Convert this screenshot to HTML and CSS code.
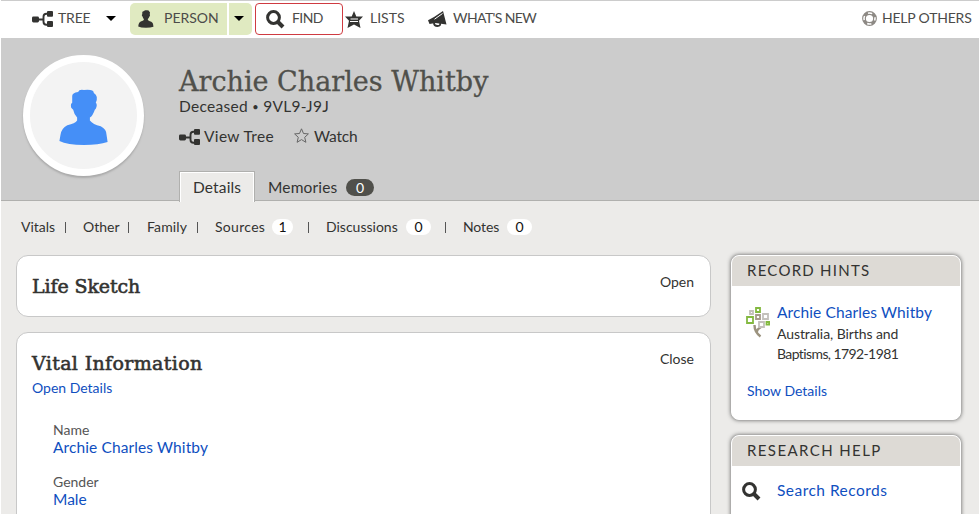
FILE: index.html
```html
<!DOCTYPE html>
<html lang="en">
<head>
<meta charset="utf-8">
<title>Archie Charles Whitby</title>
<link rel="stylesheet" href="styles.css">
</head>
<body>
<svg class="defs" aria-hidden="true">
  <symbol id="tree" viewBox="0 0 21 16"><path d="M6 8.500h6M17 2.700h-2.500q-3 0-3 3v5q0 3 3 3H17" fill="none" stroke="currentColor" stroke-width="1.900"/><rect y="5.500" width="7" height="6" rx="1.400"/><rect x="15" width="6" height="5.700" rx="1"/><rect x="15" y="10" width="6" height="6" rx="1"/></symbol>
  <symbol id="search" viewBox="0 0 19 19"><circle cx="7.500" cy="7.500" r="5.900" fill="none" stroke="currentColor" stroke-width="3"/><path d="M11.500 11.500l5.500 5.500" stroke="currentColor" stroke-width="4"/></symbol>
  <symbol id="person" viewBox="0 0 50 58"><path d="M13 7Q13 4 19 3Q20 0 25 1Q35 0 35 4Q40 7 37 14Q39 16 37 20L36 21Q34 27 31 29V32Q34 36 42 38Q48 41 48 47L49 54Q40 57 25 57Q8 57 0 53L1 47Q2 40 8 37Q16 35 18 32V29Q15 26 14 21L12 19Q11 15 13 14Z"/></symbol>
</svg>
<div class="page">
  <header class="topbar">
    <a class="nav nav-tree"><svg class="i-tree"><use href="#tree"/></svg><span class="t t-tree">TREE</span><i class="caret"></i></a>
    <a class="nav nav-person"><svg class="i-person"><use href="#person"/></svg><span class="t t-person">PERSON</span></a>
    <a class="nav nav-drop"><i class="caret"></i></a>
    <a class="nav nav-find"><svg class="i-search"><use href="#search"/></svg><span class="t t-find">FIND</span></a>
    <a class="nav nav-lists"><svg class="i-lists" viewBox="0 0 18 17"><path d="M9 0l2.300 5.500H18l-4 4.200L15.500 17 9 13.600 2.500 17 4 9.700 0 5.500h6.700z"/><path d="M5.500 8h7.500M5 10.500h8" stroke="#fff" stroke-width="1.100"/></svg><span class="t t-lists">LISTS</span></a>
    <a class="nav nav-news"><svg class="i-news" viewBox="0 0 20 16"><path d="M15 0l3.500 13.500L7.500 12l-6 1L0 9.200 6 6z"/><path d="M14.500 2.500L6.500 8.200" stroke="#fff" stroke-width="1"/><path d="M6 12q0 3 3.500 3t2.500-3" fill="none" stroke="currentColor" stroke-width="1.800"/></svg><span class="t t-news">WHAT'S NEW</span></a>
    <a class="nav nav-help"><svg class="i-help" viewBox="0 0 15 15"><circle cx="7.500" cy="7.500" r="5.500" fill="none" stroke="#8d8984" stroke-width="3.800"/><circle cx="7.500" cy="7.500" r="5.500" fill="none" stroke="#fff" stroke-width="1.500" stroke-dasharray="4.320 4.320" stroke-dashoffset="2.160"/></svg><span class="t t-help">HELP OTHERS</span></a>
  </header>
  <section class="hero">
    <div class="avatar"><svg class="i-avatar"><use href="#person"/></svg></div>
    <div class="identity">
      <h1>Archie Charles Whitby</h1>
      <p class="status">Deceased <small>•</small> 9VL9-J9J</p>
      <div class="actions">
        <a class="view"><svg class="i-tree"><use href="#tree"/></svg><span>View Tree</span></a>
        <a class="watch"><svg class="i-star" viewBox="0 0 15 15"><path d="M7.500.800l2 4.700 4.900.400-3.700 3.400 1.200 5-4.400-2.700-4.400 2.700 1.200-5L.600 5.900l4.900-.400z" fill="none" stroke="#666" stroke-width="1"/></svg><span>Watch</span></a>
      </div>
      <nav class="tabs"><a class="tab active"><span>Details</span></a><a class="tab memories"><span>Memories</span><b>0</b></a></nav>
    </div>
  </section>
  <nav class="subnav">
    <a class="s-vitals">Vitals</a><i></i><a class="s-other">Other</a><i></i><a class="s-family">Family</a><i></i><a class="s-sources">Sources<b>1</b></a><i></i><a class="s-disc">Discussions<b>0</b></a><i></i><a class="s-notes">Notes<b>0</b></a>
  </nav>
  <main class="columns">
    <div class="main">
      <section class="card sketch"><h2>Life Sketch</h2><a class="toggle">Open</a></section>
      <section class="card vital">
        <div class="heading"><h2 class="wide">Vital Information</h2><a class="toggle">Close</a></div>
        <a class="details">Open Details</a>
        <dl><dt>Name</dt><dd class="name">Archie Charles Whitby</dd><dt>Gender</dt><dd>Male</dd></dl>
      </section>
    </div>
    <aside>
      <section class="panel hints">
        <h3>RECORD HINTS</h3>
        <div class="hint">
          <svg class="i-hint" viewBox="0 0 24 30"><path d="M8.500 18q0 7 6 11.500M15 20q-4 2-4.500 5.500" fill="none" stroke="#9c937f" stroke-width="2.400"/><g fill="#fff" stroke-width="1.800"><path stroke="#c4c1bc" d="M4 4h3v3H4zM17 7h5v5h-5zM13 15h5v5h-5z"/><path stroke="#a69b8c" d="M10 8h4v4h-4z"/><path stroke="#83b940" d="M10 1h4v4h-4zM1 10h6v6H1zM20.500 15h2.600v2.600h-2.600z"/></g></svg>
          <div><a class="name">Archie Charles Whitby</a><p><span class="l1">Australia, Births and</span><br><span class="l2">Baptisms, 1792-1981</span></p></div>
        </div>
        <a class="show">Show Details</a>
      </section>
      <section class="panel help">
        <h3>RESEARCH HELP</h3>
        <div class="records"><svg class="i-search"><use href="#search"/></svg><a>Search Records</a></div>
      </section>
    </aside>
  </main>
</div>
</body>
</html>
```
FILE: styles.css
```css
* { box-sizing: border-box; margin: 0; padding: 0; }
body { width: 980px; height: 514px; overflow: hidden; background: #fff; font: 15.5px/20px Lato, "Liberation Sans", sans-serif; color: #333331; }
svg { display: block; flex: none; fill: currentColor; overflow: visible; }
.defs { position: absolute; width: 0; height: 0; }
a, span, h1, h2, h3, p, dt, dd { white-space: nowrap; }
b, i { font-weight: 400; font-style: normal; }
.page { width: 978px; margin-left: 1px; height: 514px; overflow: hidden; background: #ecebe9; }

.topbar { display: flex; height: 38px; border-top: 1px solid #ccc; background: #fff; font-size: 14px; color: #4b4b49; padding: 2px 0 2px 31px; }
.nav { display: flex; align-items: center; height: 32px; flex: none; }
.nav svg { color: #333331; }
.i-tree { width: 21px; height: 16px; }
.i-search { width: 19px; height: 19px; }
.i-person { width: 16px; height: 18px; }
.i-lists { width: 18px; height: 17px; }
.i-news { width: 20px; height: 16px; }
.i-help { width: 15px; height: 15px; }
.caret { border: 5px solid transparent; border-top-color: #000; border-bottom: 0; margin-bottom: 2px; }
.t { padding-bottom: 2px; }
.nav-tree { width: 98px; }
.nav-tree .t { width: 48px; margin-left: 5px; letter-spacing: -0.2px; }
.nav-person { width: 97px; background: #e0eac1; border-radius: 5px 0 0 5px; padding-left: 8px; }
.nav-person .t { margin-left: 10px; }
.nav-drop { width: 23px; margin-left: 2px; background: #e0eac1; border-radius: 0 5px 5px 0; padding-left: 5px; }
.nav-find { width: 88px; margin-left: 3px; border: 1px solid #cf3b41; border-radius: 4px; padding-left: 10px; }
.nav-find .t { margin-left: 7px; letter-spacing: -0.6px; }
.nav-lists { width: 82px; margin-left: 2px; }
.nav-lists .t { margin-left: 7px; }
.nav-news { margin-left: 1px; width: 434px; }
.nav-news .t { margin-left: 5px; letter-spacing: -0.6px; }
.nav-help .t { margin-left: 5px; letter-spacing: -0.2px; }
.i-help { margin-bottom: 1px; }

.hero { display: flex; height: 163px; background: #ccc; border-bottom: 1px solid #b0b0ae; padding: 17px 0 0 22px; }
.avatar { width: 121px; height: 121px; border: 7px solid #fff; border-radius: 50%; background: #f3f3f3; box-shadow: 0 2px 2px #aaa; display: flex; justify-content: center; padding-top: 27px; flex: none; }
.i-avatar { width: 50px; height: 57px; color: #458ff7; }
.identity { margin-left: 35px; }
h1 { font: 27px/32px "DejaVu Serif", serif; color: #50504b; margin-top: 11px; -webkit-text-stroke: 0.3px; }
.status { line-height: 18px; letter-spacing: 0.3px; margin-top: -1px; }
.status small { font-size: 11px; vertical-align: 1px; line-height: 10px; }
.actions { display: flex; align-items: center; height: 22px; margin-top: 11px; }
.actions a { display: flex; align-items: center; height: 22px; }
.actions span { padding-bottom: 2px; }
.view { width: 115px; }
.actions .view span { margin-left: 4px; letter-spacing: 0.35px; padding-bottom: 3px; }
.i-star { width: 15px; height: 15px; margin-bottom: 4px; }
.watch span { margin-left: 5px; letter-spacing: -0.2px; }
.tabs { display: flex; margin-top: 23px; height: 32px; }
.tab { display: flex; align-items: center; letter-spacing: 0.15px; }
.active { width: 76px; height: 31px; background: #ecebe9; border: 1px solid #b0b0ae; border-bottom: 0; box-shadow: inset 1px 1px #fff, inset -1px 0 #fff; padding-left: 13px; }
.memories { padding: 0 0 1px 13px; height: 33px; }
.memories b { letter-spacing: 0; width: 28px; height: 17px; border-radius: 9px; background: #50504b; color: #fff; text-align: center; line-height: 17px; margin-left: 8px; font-size: 14px; }
.memories span { width: 70px; }

.subnav { display: flex; align-items: center; height: 54px; padding: 0 0 2px 20px; font-size: 14px; }
.subnav a { display: flex; align-items: center; flex: none; }
.subnav i { width: 1px; height: 11px; background: #555; flex: none; margin-right: 17px; }
.subnav b { letter-spacing: 0; width: 21px; height: 16px; border-radius: 8px; background: #fff; color: #111; text-align: center; line-height: 16px; margin-left: auto; }
.s-vitals { width: 44px; }
.s-other { width: 45px; }
.subnav .s-other + i { margin-right: 18px; }
.s-family { width: 50px; letter-spacing: 0.15px; }
.s-sources { width: 78px; margin-right: 15px; letter-spacing: 0.3px; }
.s-disc { width: 105px; margin-right: 14px; }
.s-disc b, .s-notes b { width: 25px; }
.s-notes { width: 69px; letter-spacing: -0.1px; }

.columns { display: flex; padding-left: 15px; gap: 20px; }
.main { width: 695px; flex: none; }
.card { background: #fff; border: 1px solid #c8c8c8; border-radius: 12px; padding-left: 15px; padding-right: 16px; }
.sketch { height: 62px; display: flex; justify-content: space-between; padding-top: 16px; }
h2 { font: 19px/28px "DejaVu Serif", serif; height: 28px; -webkit-text-stroke: 0.6px; letter-spacing: -0.1px; }
h2.wide { letter-spacing: 0.35px; }
.toggle { font-size: 14px; line-height: 20px; }
.vital { height: 200px; margin-top: 15px; padding-top: 16px; }
.heading { display: flex; justify-content: space-between; }
.details { display: block; font-size: 14px; line-height: 20px; margin-top: 1px; }
.details, dd, .hint a, .show, .records a { color: #0f4fc0; }
dl { margin: 23px 0 0 21px; }
dt { font-size: 14px; line-height: 17px; color: #555; }
dd { line-height: 18px; margin-bottom: 17px; }
.name { letter-spacing: 0.11px; }
aside { width: 230px; flex: none; }
.panel { background: #fff; border: 1px solid #fff; border-radius: 8px; box-shadow: 0 0 4px #555; }
.hints { height: 165px; }
.help { height: 100px; margin-top: 15px; }
h3 { font-size: 15px; font-weight: 400; line-height: 29px; height: 31px; background: #dddad5; border-radius: 7px 7px 0 0; padding-left: 15px; letter-spacing: 1.25px; background-clip: padding-box; border-bottom: 1px solid #fff; }
.help h3 { letter-spacing: 1.4px; }
.hint { display: flex; padding: 15px 0 0 14px; }
.i-hint { width: 24px; height: 30px; margin-top: 5px; margin-right: 7px; }
.hint p { font-size: 14px; line-height: 20px; margin-top: 2px; }
.hint a { display: block; line-height: 20px; }
.l1 { letter-spacing: -0.08px; }
.l2 { letter-spacing: -0.6px; }
.show { display: block; font-size: 14px; margin: 17px 0 0 15px; }
.records { display: flex; align-items: center; height: 20px; margin: 14px 0 0 10px; }
.records a { margin-left: 16px; letter-spacing: 0.47px; padding-bottom: 2px; }
```
